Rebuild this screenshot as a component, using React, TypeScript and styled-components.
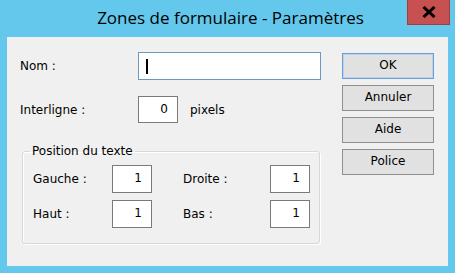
import React from 'react';
import styled, { createGlobalStyle } from 'styled-components';

const GlobalStyle = createGlobalStyle`
  html, body {
    margin: 0;
    padding: 0;
    background: #63c8eb;
  }
`;

const Frame = styled.div`
  width: 455px;
  height: 273px;
  box-sizing: border-box;
  background: #63c8eb;
  padding: 0 7px 7px 7px;
  display: flex;
  flex-direction: column;
`;

const TitleBar = styled.div`
  position: relative;
  height: 37px;
  flex: none;
  display: flex;
  align-items: center;
  justify-content: center;
`;

const Title = styled.div`
  font-family: "Open Sans", "Noto Sans", sans-serif;
  font-size: 17px;
  color: #000;
  padding-left: 6px;
  margin-top: -2px;
`;

const CloseButton = styled.div`
  position: absolute;
  top: 0;
  right: -2px;
  width: 43px;
  height: 25px;
  box-sizing: border-box;
  background: #c75050;
  border: 1px solid #a03c3c;
  border-top: none;
  display: flex;
  align-items: center;
  justify-content: center;
`;

const Client = styled.div`
  flex: 1;
  background: #f0f0f0;
  display: flex;
  padding: 15px 14px 0 13px;
  font-family: "DejaVu Sans", sans-serif;
  font-size: 12px;
  color: #000;
`;

const FormColumn = styled.div`
  width: 301px;
  display: flex;
  flex-direction: column;
`;

const Row = styled.div<{ $gap?: number }>`
  display: flex;
  align-items: center;
  margin-bottom: ${p => p.$gap ?? 0}px;
`;

const Label = styled.div<{ $w: number }>`
  width: ${p => p.$w}px;
  flex: none;
`;

const TextBox = styled.div<{ $w: number; $h: number; $focus?: boolean }>`
  width: ${p => p.$w}px;
  height: ${p => p.$h}px;
  box-sizing: border-box;
  background: #fff;
  border: 1px solid ${p => (p.$focus ? '#6c98bf' : '#7a7a7a')};
  display: flex;
  align-items: center;
  justify-content: ${p => (p.$focus ? 'flex-start' : 'flex-end')};
  padding: 0 9px 2px 6px;
  flex: none;
`;

const Caret = styled.div`
  width: 2px;
  height: 15px;
  background: #000;
  margin-left: 1px;
  margin-top: 2px;
`;

const Unit = styled.div`
  margin-left: 12px;
`;

const Group = styled.fieldset`
  margin: 0 0 0 2px;
  padding: 0;
  width: 298px;
  height: 99px;
  box-sizing: border-box;
  border: 1px solid #d8d8d8;
  border-radius: 3px;
  box-shadow: inset 1px 1px 0 #fff, 1px 1px 0 #fff;
`;

const Legend = styled.legend`
  margin-left: 7px;
  padding: 0 2px;
  line-height: 12px;
`;

const GroupGrid = styled.div`
  display: grid;
  grid-template-columns: 79px 40px 31px 87px 40px;
  grid-auto-rows: 28px;
  row-gap: 7px;
  align-items: center;
  padding: 8px 0 0 10px;
`;

const ButtonColumn = styled.div`
  margin-left: 21px;
  display: flex;
  flex-direction: column;
  gap: 6px;
  padding-top: 1px;
`;

const Button = styled.div<{ $default?: boolean }>`
  width: 92px;
  height: 26px;
  box-sizing: border-box;
  background: #e1e1e1;
  border: 1px solid ${p => (p.$default ? '#6f9fd0' : '#8f8f8f')};
  box-shadow: ${p => (p.$default ? 'inset 0 0 0 1px #b9d3ee' : 'none')};
  display: flex;
  align-items: center;
  justify-content: center;
  padding-bottom: 2px;
`;

export default function App() {
  return (
    <>
      <GlobalStyle />
      <Frame>
        <TitleBar>
          <Title>Zones de formulaire - Paramètres</Title>
          <CloseButton>
            <svg width="14" height="12" viewBox="0 0 14 12">
              <path d="M1.5 1 L12.5 11 M12.5 1 L1.5 11" stroke="#000" strokeWidth="3" />
            </svg>
          </CloseButton>
        </TitleBar>
        <Client>
          <FormColumn>
            <Row $gap={16}>
              <Label $w={118}>Nom :</Label>
              <TextBox $w={183} $h={28} $focus>
                <Caret />
              </TextBox>
            </Row>
            <Row $gap={22}>
              <Label $w={118}>Interligne :</Label>
              <TextBox $w={40} $h={27}>0</TextBox>
              <Unit>pixels</Unit>
            </Row>
            <Group>
              <Legend>Position du texte</Legend>
              <GroupGrid>
                <Label $w={79}>Gauche :</Label>
                <TextBox $w={40} $h={28}>1</TextBox>
                <span />
                <Label $w={87}>Droite :</Label>
                <TextBox $w={40} $h={28}>1</TextBox>
                <Label $w={79}>Haut :</Label>
                <TextBox $w={40} $h={28}>1</TextBox>
                <span />
                <Label $w={87}>Bas :</Label>
                <TextBox $w={40} $h={28}>1</TextBox>
              </GroupGrid>
            </Group>
          </FormColumn>
          <ButtonColumn>
            <Button $default>OK</Button>
            <Button>Annuler</Button>
            <Button>Aide</Button>
            <Button>Police</Button>
          </ButtonColumn>
        </Client>
      </Frame>
    </>
  );
}
